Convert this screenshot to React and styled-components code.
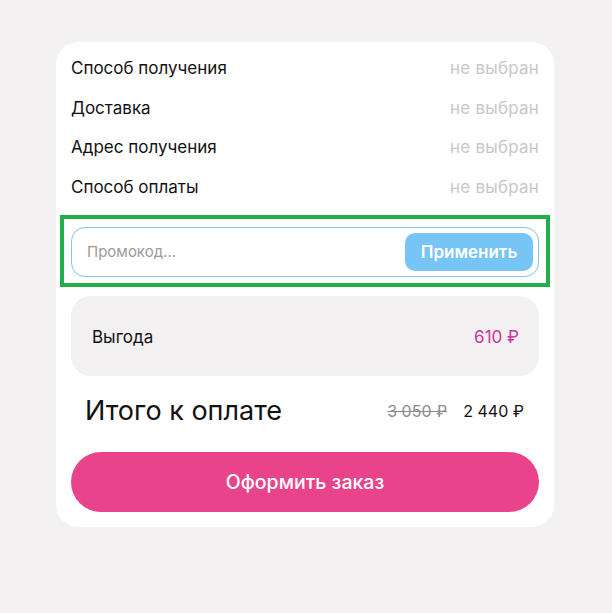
import React, { useState } from "react";
import styled, { createGlobalStyle } from "styled-components";

const GlobalStyle = createGlobalStyle`
  html, body {
    margin: 0;
    padding: 0;
    background: #f3f1f2;
    font-family: Inter, "Noto Sans", "Liberation Sans", sans-serif;
  }
`;

const Page = styled.div`
  display: flex;
  justify-content: center;
  padding: 42px 2px 86px 0;
  min-height: 100vh;
  box-sizing: border-box;
`;

const Card = styled.div`
  width: 498px;
  box-sizing: border-box;
  background: #fff;
  border-radius: 22px;
  padding: 6px 15px 15px 15px;
  display: flex;
  flex-direction: column;
`;

const InfoList = styled.div`
  display: flex;
  flex-direction: column;
`;

const InfoRow = styled.div`
  display: flex;
  justify-content: space-between;
  align-items: center;
  height: 39.7px;
  font-size: 17px;
  color: #111;
`;

const Muted = styled.span`
  color: #c9c6c8;
  letter-spacing: 0.2px;
`;

const PromoFrame = styled.div`
  margin: 8px -11px 0 -11px;
  border: 4px solid #22ad4d;
  padding: 8px 7px 6px 7px;
`;

const PromoField = styled.form`
  display: flex;
  align-items: center;
  height: 50px;
  box-sizing: border-box;
  border: 1px solid #7cc6f4;
  border-radius: 14px;
  padding: 0 5px 0 13px;
`;

const PromoInput = styled.input`
  flex: 1;
  border: none;
  outline: none;
  background: transparent;
  font-family: inherit;
  font-size: 15px;
  color: #111;

  &::placeholder {
    color: #9b9b9b;
  }
`;

const ApplyButton = styled.button`
  width: 128px;
  height: 38px;
  border: none;
  border-radius: 10px;
  background: #77c4f7;
  color: #fff;
  font-family: inherit;
  font-size: 17px;
  font-weight: 600;
  cursor: pointer;
`;

const Benefit = styled.div`
  margin-top: 9px;
  height: 78px;
  border-radius: 20px;
  background: #f3f0f1;
  display: flex;
  align-items: center;
  justify-content: space-between;
  padding: 2px 20px 0 21px;
  font-size: 17px;
  color: #111;
`;

const BenefitValue = styled.span`
  color: #c9359f;
`;

const Total = styled.div`
  display: flex;
  align-items: center;
  justify-content: space-between;
  height: 70px;
  padding: 0 15px 0 14px;
`;

const TotalLabel = styled.span`
  font-size: 27px;
  color: #111;
`;

const Prices = styled.div`
  display: flex;
  gap: 16px;
  font-size: 16px;
`;

const OldPrice = styled.s`
  color: #8c8a8b;
`;

const NewPrice = styled.span`
  color: #111;
`;

const Checkout = styled.button`
  margin-top: 6px;
  height: 60px;
  border: none;
  border-radius: 30px;
  background: #e9448b;
  color: #fff;
  font-family: inherit;
  font-size: 19.5px;
  font-weight: 500;
  cursor: pointer;
`;

const rows = ["Способ получения", "Доставка", "Адрес получения", "Способ оплаты"];

export default function App() {
  const [code, setCode] = useState("");

  return (
    <>
      <GlobalStyle />
      <Page>
        <Card>
          <InfoList>
            {rows.map((label) => (
              <InfoRow key={label}>
                <span>{label}</span>
                <Muted>не выбран</Muted>
              </InfoRow>
            ))}
          </InfoList>

          <PromoFrame>
            <PromoField onSubmit={(e) => e.preventDefault()}>
              <PromoInput
                placeholder="Промокод..."
                value={code}
                onChange={(e) => setCode(e.target.value)}
              />
              <ApplyButton type="submit">Применить</ApplyButton>
            </PromoField>
          </PromoFrame>

          <Benefit>
            <span>Выгода</span>
            <BenefitValue>610 ₽</BenefitValue>
          </Benefit>

          <Total>
            <TotalLabel>Итого к оплате</TotalLabel>
            <Prices>
              <OldPrice>3 050 ₽</OldPrice>
              <NewPrice>2 440 ₽</NewPrice>
            </Prices>
          </Total>

          <Checkout>Оформить заказ</Checkout>
        </Card>
      </Page>
    </>
  );
}
